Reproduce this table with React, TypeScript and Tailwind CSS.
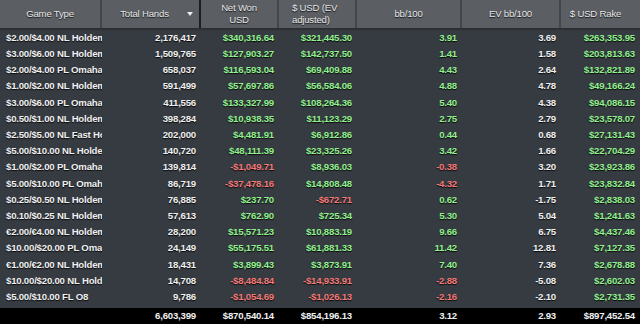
import React from 'react';

type Tone = 'g' | 'r' | 'w';

interface Row {
  game: string;
  hands: string;
  net: [string, Tone];
  ev: [string, Tone];
  bb: [string, Tone];
  evbb: string;
  rake: string;
}

const rows: Row[] = [
  { game: '$2.00/$4.00 NL Holdem', hands: '2,176,417', net: ['$340,316.64', 'g'], ev: ['$321,445.30', 'g'], bb: ['3.91', 'g'], evbb: '3.69', rake: '$263,353.95' },
  { game: '$3.00/$6.00 NL Holdem', hands: '1,509,765', net: ['$127,903.27', 'g'], ev: ['$142,737.50', 'g'], bb: ['1.41', 'g'], evbb: '1.58', rake: '$203,813.63' },
  { game: '$2.00/$4.00 PL Omaha', hands: '658,037', net: ['$116,593.04', 'g'], ev: ['$69,409.88', 'g'], bb: ['4.43', 'g'], evbb: '2.64', rake: '$132,821.89' },
  { game: '$1.00/$2.00 NL Holdem', hands: '591,499', net: ['$57,697.86', 'g'], ev: ['$56,584.06', 'g'], bb: ['4.88', 'g'], evbb: '4.78', rake: '$49,166.24' },
  { game: '$3.00/$6.00 PL Omaha', hands: '411,556', net: ['$133,327.99', 'g'], ev: ['$108,264.36', 'g'], bb: ['5.40', 'g'], evbb: '4.38', rake: '$94,086.15' },
  { game: '$0.50/$1.00 NL Holdem', hands: '398,284', net: ['$10,938.35', 'g'], ev: ['$11,123.29', 'g'], bb: ['2.75', 'g'], evbb: '2.79', rake: '$23,578.07' },
  { game: '$2.50/$5.00 NL Fast Holdem', hands: '202,000', net: ['$4,481.91', 'g'], ev: ['$6,912.86', 'g'], bb: ['0.44', 'g'], evbb: '0.68', rake: '$27,131.43' },
  { game: '$5.00/$10.00 NL Holdem', hands: '140,720', net: ['$48,111.39', 'g'], ev: ['$23,325.26', 'g'], bb: ['3.42', 'g'], evbb: '1.66', rake: '$22,704.29' },
  { game: '$1.00/$2.00 PL Omaha', hands: '139,814', net: ['-$1,049.71', 'r'], ev: ['$8,936.03', 'g'], bb: ['-0.38', 'r'], evbb: '3.20', rake: '$23,923.86' },
  { game: '$5.00/$10.00 PL Omaha', hands: '86,719', net: ['-$37,478.16', 'r'], ev: ['$14,808.48', 'g'], bb: ['-4.32', 'r'], evbb: '1.71', rake: '$23,832.84' },
  { game: '$0.25/$0.50 NL Holdem', hands: '76,885', net: ['$237.70', 'g'], ev: ['-$672.71', 'r'], bb: ['0.62', 'g'], evbb: '-1.75', rake: '$2,838.03' },
  { game: '$0.10/$0.25 NL Holdem', hands: '57,613', net: ['$762.90', 'g'], ev: ['$725.34', 'g'], bb: ['5.30', 'g'], evbb: '5.04', rake: '$1,241.63' },
  { game: '€2.00/€4.00 NL Holdem', hands: '28,200', net: ['$15,571.23', 'g'], ev: ['$10,883.19', 'g'], bb: ['9.66', 'g'], evbb: '6.75', rake: '$4,437.46' },
  { game: '$10.00/$20.00 PL Omaha', hands: '24,149', net: ['$55,175.51', 'g'], ev: ['$61,881.33', 'g'], bb: ['11.42', 'g'], evbb: '12.81', rake: '$7,127.35' },
  { game: '€1.00/€2.00 NL Holdem', hands: '18,431', net: ['$3,899.43', 'g'], ev: ['$3,873.91', 'g'], bb: ['7.40', 'g'], evbb: '7.36', rake: '$2,678.88' },
  { game: '$10.00/$20.00 NL Holdem', hands: '14,708', net: ['-$8,484.84', 'r'], ev: ['-$14,933.91', 'r'], bb: ['-2.88', 'r'], evbb: '-5.08', rake: '$2,602.03' },
  { game: '$5.00/$10.00 FL O8', hands: '9,786', net: ['-$1,054.69', 'r'], ev: ['-$1,026.13', 'r'], bb: ['-2.16', 'r'], evbb: '-2.10', rake: '$2,731.35' },
];

const toneClass: Record<Tone, string> = {
  g: 'text-[#93f08f]',
  r: 'text-[#f47a78]',
  w: 'text-[#f0f0f0]',
};

const cols = 'grid grid-cols-[102px_99px_78px_78px_105px_99px_79px]';

function Cell({ children, tone = 'w' }: { children: React.ReactNode; tone?: Tone }) {
  return <div className={`text-right pr-[5px] whitespace-nowrap ${toneClass[tone]}`}>{children}</div>;
}

function HeadCell({ children, last, dark }: { children: React.ReactNode; last?: boolean; dark?: boolean }) {
  return (
    <div
      className={`relative flex items-center justify-center text-center leading-[12px] ${
        last ? '' : dark ? 'border-r-2 border-[#1c1e21]' : 'border-r-2 border-[#43474c]'
      }`}
    >
      {children}
    </div>
  );
}

export default function App() {
  return (
    <div
      className="w-[640px] h-[324px] bg-[#363b41] flex flex-col overflow-hidden text-[9.6px] tracking-[-0.2px] [text-shadow:0_1px_1px_rgba(0,0,0,0.85)]"
      style={{ fontFamily: '"Liberation Sans", Arial, sans-serif' }}
    >
      {/* header */}
      <div className={`${cols} h-[30px] bg-[#5b5f64] text-[#e8e8e8] border-b-2 border-[#2d3136]`}>
        <HeadCell>Game Type</HeadCell>
        <HeadCell dark>
          <span className="pr-[12px]">Total Hands</span>
          <span className="absolute right-[6px] top-[12px] w-0 h-0 border-l-[3px] border-r-[3px] border-t-[4px] border-l-transparent border-r-transparent border-t-[#eeeeee]" />
        </HeadCell>
        <HeadCell>
          <span>
            Net Won
            <br />
            USD
          </span>
        </HeadCell>
        <HeadCell>
          <span className="w-full text-left pl-[13px]">
            $ USD (EV
            <br />
            adjusted)
          </span>
        </HeadCell>
        <HeadCell>bb/100</HeadCell>
        <HeadCell>EV bb/100</HeadCell>
        <HeadCell last>
          <span className="pr-[10px]">$ USD Rake</span>
        </HeadCell>
      </div>

      {/* body */}
      <div className="flex-1 font-bold">
        {rows.map((r) => (
          <div key={r.game} className={`${cols} h-[16.2px] items-center`}>
            <div className="pl-[6px] overflow-hidden whitespace-nowrap text-[#f0f0f0]">{r.game}</div>
            <Cell>{r.hands}</Cell>
            <Cell tone={r.net[1]}>{r.net[0]}</Cell>
            <Cell tone={r.ev[1]}>{r.ev[0]}</Cell>
            <Cell tone={r.bb[1]}>{r.bb[0]}</Cell>
            <Cell>{r.evbb}</Cell>
            <Cell tone="g">{r.rake}</Cell>
          </div>
        ))}
      </div>

      {/* totals */}
      <div className={`${cols} h-[16px] items-center bg-black font-bold`}>
        <div />
        <Cell>6,603,399</Cell>
        <Cell>$870,540.14</Cell>
        <Cell>$854,196.13</Cell>
        <Cell>3.12</Cell>
        <Cell>2.93</Cell>
        <Cell>$897,452.54</Cell>
      </div>
    </div>
  );
}
